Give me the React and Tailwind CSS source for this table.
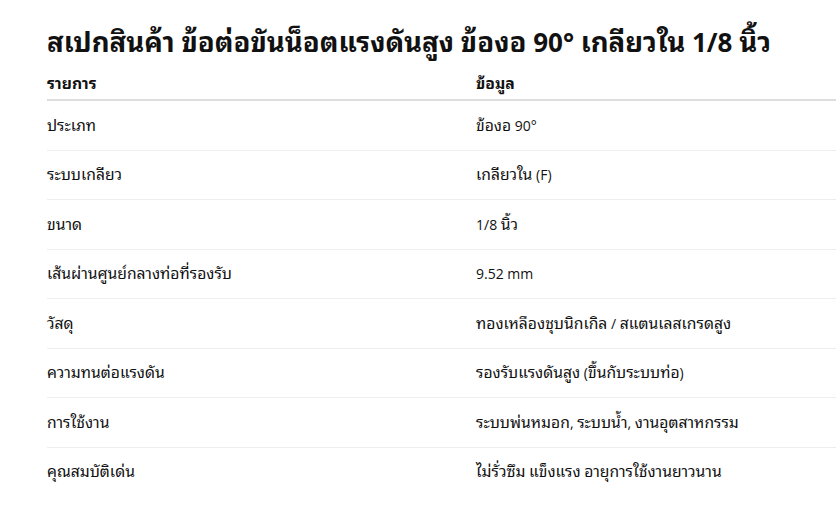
const rows = [
  ["ประเภท", "ข้องอ 90°"],
  ["ระบบเกลียว", "เกลียวใน (F)"],
  ["ขนาด", "1/8 นิ้ว"],
  ["เส้นผ่านศูนย์กลางท่อที่รองรับ", "9.52 mm"],
  ["วัสดุ", "ทองเหลืองชุบนิกเกิล / สแตนเลสเกรดสูง"],
  ["ความทนต่อแรงดัน", "รองรับแรงดันสูง (ขึ้นกับระบบท่อ)"],
  ["การใช้งาน", "ระบบพ่นหมอก, ระบบน้ำ, งานอุตสาหกรรม"],
  ["คุณสมบัติเด่น", "ไม่รั่วซึม แข็งแรง อายุการใช้งานยาวนาน"],
];

// Thai runs are set a touch larger so they sit like the reference's Thai face
function T({ text, big }) {
  return text.split(/([\u0E00-\u0E7F]+)/).map((part, i) =>
    /[\u0E00-\u0E7F]/.test(part) ? (
      <span key={i} className={big ? "text-[1.06em]" : "text-[1.12em]"}>
        {part}
      </span>
    ) : (
      part
    )
  );
}

export default function App() {
  return (
    <div
      className="w-[836px] h-[530px] overflow-hidden bg-white text-[#111] pl-[47px] pt-[25px]"
      style={{ fontFamily: '"Open Sans", "Noto Sans Thai Looped", sans-serif' }}
    >
      <h1 className="text-[26px] font-bold leading-[34px] whitespace-nowrap">
        <T big text="สเปกสินค้า ข้อต่อขันน็อตแรงดันสูง ข้องอ 90° เกลียวใน 1/8 นิ้ว" />
      </h1>
      <table className="mt-[7px] w-[858px] border-collapse text-[14px]">
        <thead>
          <tr className="border-b-2 border-[#dddddd]">
            <th className="w-[429px] text-left font-bold pt-[5px] pb-[3px] leading-[24px]">
              <T text="รายการ" />
            </th>
            <th className="text-left font-bold pt-[5px] pb-[3px] leading-[24px]">
              <T text="ข้อมูล" />
            </th>
          </tr>
        </thead>
        <tbody>
          {rows.map(([k, v], i) => (
            <tr key={k} className={i < rows.length - 1 ? "border-b border-[#eeeeee]" : ""}>
              <td className="py-[11.75px] leading-[24px] whitespace-nowrap">
                <T text={k} />
              </td>
              <td className="py-[11.75px] leading-[24px] whitespace-nowrap">
                <T text={v} />
              </td>
            </tr>
          ))}
        </tbody>
      </table>
    </div>
  );
}
